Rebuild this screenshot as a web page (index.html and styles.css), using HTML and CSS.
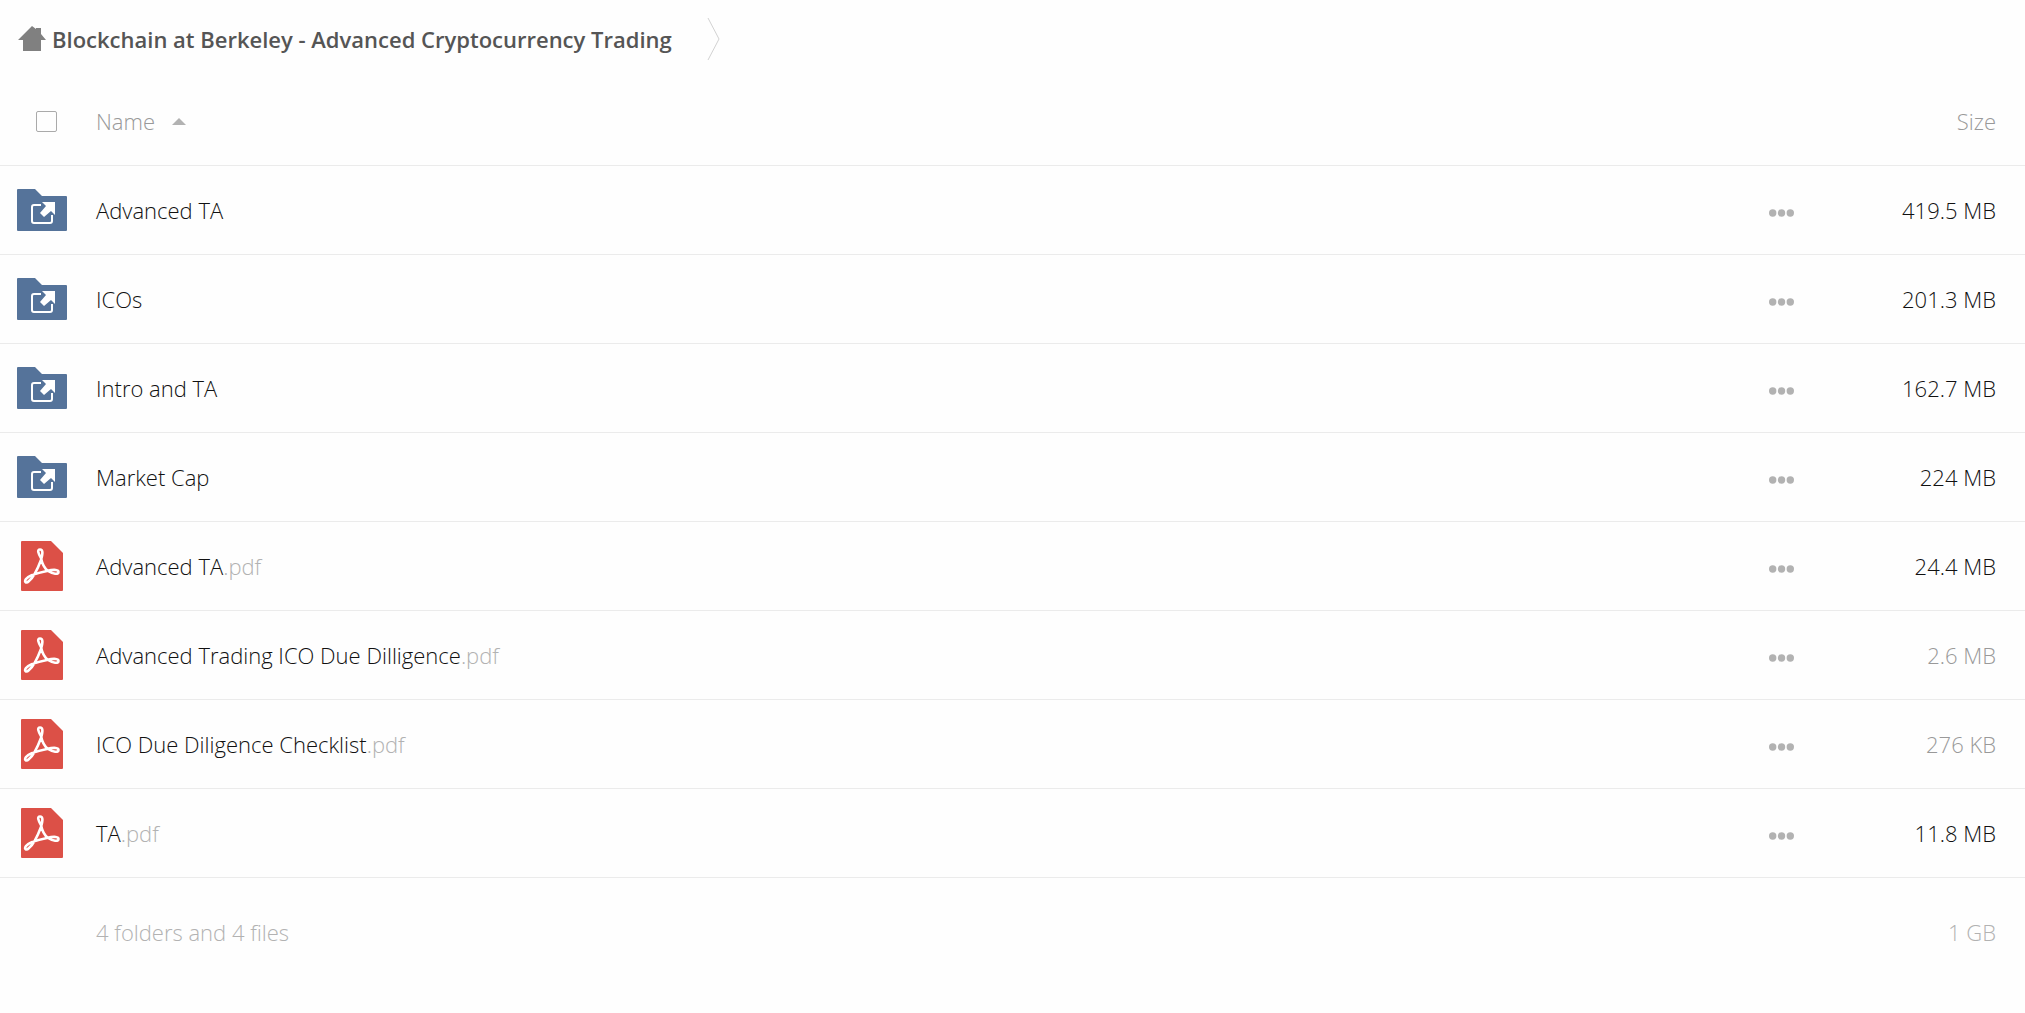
FILE: index.html
```html
<!DOCTYPE html>
<html lang="en">
<head>
    <meta charset="UTF-8">
    <meta name="viewport" content="width=device-width, initial-scale=1.0">
    <title>Blockchain at Berkeley - Advanced Cryptocurrency Trading</title>

    <link rel="stylesheet" href="styles.css">
</head>
<body>
    <!-- Shared icons -->
    <svg class="sprite" aria-hidden="true">
        <symbol id="icon-folder" viewBox="0 0 50 42">
            <path fill="#55739a" d="M1 0H18L25 7H49Q50 7 50 8V41Q50 42 49 42H1Q0 42 0 41V1Q0 0 1 0Z"/>
            <path fill="none" stroke="#fff" stroke-width="2" d="M24 16H17Q15 16 15 18V32Q15 34 17 34H33Q35 34 35 32V26"/>
            <path fill="#fff" d="M25 13H38V26L34 22L27 28L23 24L29 17Z"/>
        </symbol>
        <symbol id="icon-pdf" viewBox="0 0 42 50">
            <path fill="#dc5047" d="M1 0H30L42 12V49Q42 50 41 50H1Q0 50 0 49V1Q0 0 1 0Z"/>
            <path fill="none" stroke="#fff" stroke-width="2.6" stroke-linejoin="round" d="M20 17C17 12 16 8.500 19 8.500C22 8.500 22 12 20 19C17 27 13 36 8 40C5 43 3 41 5 38C8 34 16 32 26 30C34 28 37.500 29 37.500 31C37.500 34 32 33 27 30C23 27 21 22 20 17Z"/>
        </symbol>
        <symbol id="icon-dots" viewBox="0 0 25 8">
            <circle cx="3.700" cy="4" r="3.700"/>
            <circle cx="12.500" cy="4" r="3.700"/>
            <circle cx="21.300" cy="4" r="3.700"/>
        </symbol>
    </svg>

    <nav class="breadcrumb">
        <a href="#">
            <svg class="home" viewBox="0 0 28 25" aria-hidden="true">
                <path fill="#808080" d="M14 0L18 3V2H23V8L28 14H23V25H5V14H0Z"/>
            </svg>
            Blockchain at Berkeley - Advanced Cryptocurrency Trading
        </a>
        <svg class="chevron" viewBox="0 0 13 44" aria-hidden="true">
            <path fill="none" stroke="#d2d2d2" d="M1 1L12 22L1 43"/>
        </svg>
    </nav>

    <table class="files">
        <thead>
            <tr>
                <th class="icon"><input type="checkbox" aria-label="Select all"></th>
                <th class="name"><button class="sort">Name <span class="arrow"></span></button></th>
                <th class="actions"></th>
                <th class="size"><button class="sort">Size</button></th>
            </tr>
        </thead>
        <tbody>
            <tr>
                <td class="icon"><svg class="folder"><use href="#icon-folder"/></svg></td>
                <td class="name"><a href="#">Advanced TA</a></td>
                <td class="actions"><button aria-label="Actions"><svg><use href="#icon-dots"/></svg></button></td>
                <td class="size">419.5 MB</td>
            </tr>
            <tr>
                <td class="icon"><svg class="folder"><use href="#icon-folder"/></svg></td>
                <td class="name"><a href="#">ICOs</a></td>
                <td class="actions"><button aria-label="Actions"><svg><use href="#icon-dots"/></svg></button></td>
                <td class="size">201.3 MB</td>
            </tr>
            <tr>
                <td class="icon"><svg class="folder"><use href="#icon-folder"/></svg></td>
                <td class="name"><a href="#">Intro and TA</a></td>
                <td class="actions"><button aria-label="Actions"><svg><use href="#icon-dots"/></svg></button></td>
                <td class="size">162.7 MB</td>
            </tr>
            <tr>
                <td class="icon"><svg class="folder"><use href="#icon-folder"/></svg></td>
                <td class="name"><a href="#">Market Cap</a></td>
                <td class="actions"><button aria-label="Actions"><svg><use href="#icon-dots"/></svg></button></td>
                <td class="size">224 MB</td>
            </tr>
            <tr>
                <td class="icon"><svg class="pdf"><use href="#icon-pdf"/></svg></td>
                <td class="name"><a href="#">Advanced TA<span class="ext">.pdf</span></a></td>
                <td class="actions"><button aria-label="Actions"><svg><use href="#icon-dots"/></svg></button></td>
                <td class="size">24.4 MB</td>
            </tr>
            <tr>
                <td class="icon"><svg class="pdf"><use href="#icon-pdf"/></svg></td>
                <td class="name"><a href="#">Advanced Trading ICO Due Dilligence<span class="ext">.pdf</span></a></td>
                <td class="actions"><button aria-label="Actions"><svg><use href="#icon-dots"/></svg></button></td>
                <td class="size small">2.6 MB</td>
            </tr>
            <tr>
                <td class="icon"><svg class="pdf"><use href="#icon-pdf"/></svg></td>
                <td class="name"><a href="#">ICO Due Diligence Checklist<span class="ext">.pdf</span></a></td>
                <td class="actions"><button aria-label="Actions"><svg><use href="#icon-dots"/></svg></button></td>
                <td class="size small">276 KB</td>
            </tr>
            <tr>
                <td class="icon"><svg class="pdf"><use href="#icon-pdf"/></svg></td>
                <td class="name"><a href="#">TA<span class="ext">.pdf</span></a></td>
                <td class="actions"><button aria-label="Actions"><svg><use href="#icon-dots"/></svg></button></td>
                <td class="size">11.8 MB</td>
            </tr>
        </tbody>
        <tfoot>
            <tr>
                <td class="icon"></td>
                <td class="name">4 folders and 4 files</td>
                <td class="actions"></td>
                <td class="size">1 GB</td>
            </tr>
        </tfoot>
    </table>
</body>
</html>
```

FILE: styles.css
```css
* {
    margin: 0;
    padding: 0;
    box-sizing: border-box;
}

body {
    font-family: "Open Sans", sans-serif;
    font-size: 22px;
    font-weight: 300;
    line-height: 30px;
    color: #111;
    background-color: #fefefe;
}

a {
    color: inherit;
    text-decoration: none;
}

button {
    font: inherit;
    color: inherit;
    background: none;
    border: none;
    cursor: pointer;
}

svg {
    display: block;
}

.sprite {
    display: none;
}

/* Breadcrumb */
.breadcrumb {
    display: flex;
    align-items: center;
    gap: 35px;
    height: 77px;
    padding-left: 18px;
}

.breadcrumb a {
    display: flex;
    align-items: center;
    gap: 6px;
    font-weight: 600;
    color: #555;
}

.home {
    width: 28px;
    height: 25px;
}

.chevron {
    width: 13px;
    height: 44px;
}

/* File list */
.files {
    width: 100%;
    border-collapse: separate;
    border-spacing: 0;
    table-layout: fixed;
}

.files th,
.files td {
    height: 89px;
    border-bottom: 1px solid #ebebeb;
    font-weight: 300;
    text-align: left;
    vertical-align: middle;
}

.files th {
    color: #999;
}

.files .icon {
    width: 96px;
}

.files .actions {
    width: 100px;
}

.files .size {
    width: 156px;
    padding-right: 29px;
    text-align: right;
}

.files .small {
    color: #999;
}

.folder {
    width: 50px;
    height: 42px;
    margin-left: 17px;
}

.pdf {
    width: 42px;
    height: 50px;
    margin-left: 21px;
}

.ext {
    color: #b2b2b2;
}

.sort {
    display: inline-flex;
    align-items: center;
    gap: 17px;
}

.arrow {
    border: 7px solid transparent;
    border-top: none;
    border-bottom-color: #b2b2b2;
}

.actions button {
    display: block;
    padding-top: 5px;
}

.actions svg {
    width: 25px;
    height: 8px;
    fill: #b2b2b2;
}

input[type="checkbox"] {
    display: block;
    appearance: none;
    width: 21px;
    height: 21px;
    margin-left: 36px;
    border: 1px solid #aaa;
    border-radius: 2px;
}

/* Summary row */
.files tfoot td {
    height: 108px;
    border-bottom: none;
    color: #b2b2b2;
}
```
